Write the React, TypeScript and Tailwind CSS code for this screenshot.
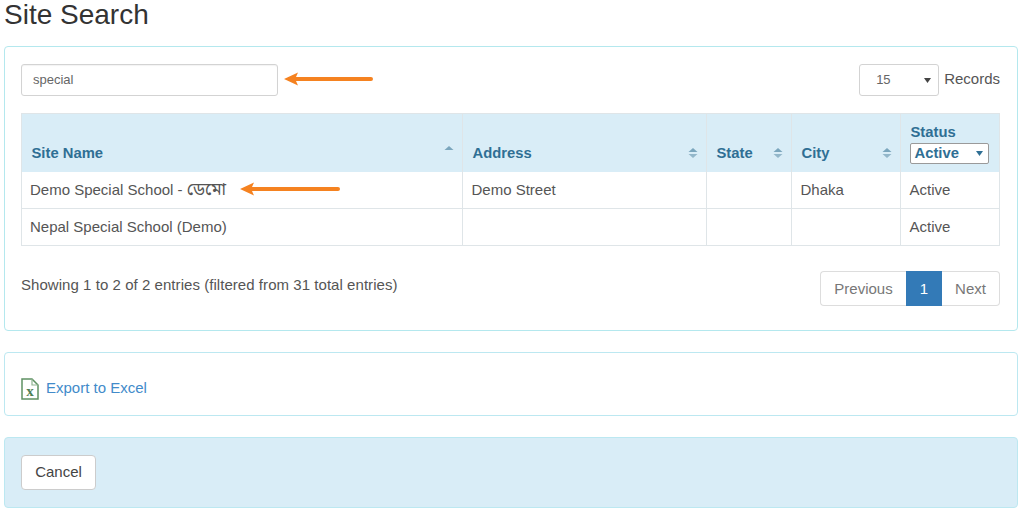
const font = { fontFamily: '"Liberation Sans", "Noto Sans", "Noto Sans Bengali", sans-serif' };

function SortIcon({ up = true, down = true }: { up?: boolean; down?: boolean }) {
	return (
		<svg width="10" height="12" viewBox="0 0 10 12" className="shrink-0">
			{up && <path d="M5 1 L9.5 5 L0.5 5 Z" fill="#7ba6bd" />}
			{down && <path d="M5 11 L9.5 7 L0.5 7 Z" fill="#93b7ca" />}
		</svg>
	);
}

function Arrow({ width }: { width: number }) {
	return (
		<svg width={width} height="16" viewBox={`0 0 ${width} 16`} className="shrink-0">
			<path d={`M1 8 L15 1.5 L13 6 L${width - 2} 6 A2 2 0 0 1 ${width - 2} 10 L13 10 L15 14.5 Z`} fill="#f58220" />
		</svg>
	);
}

function ExcelIcon() {
	return (
		<svg width="18" height="22" viewBox="0 0 18 22" className="shrink-0">
			<path d="M1 1 H11 L17 7 V21 H1 Z" fill="none" stroke="#5f9163" strokeWidth="1.5" />
			<path d="M11 1 V7 H17" fill="none" stroke="#8fb592" strokeWidth="1.2" />
			<text x="9" y="18" textAnchor="middle" fontSize="15" fontWeight="700" fill="#4f8055" fontFamily="Liberation Serif, serif">x</text>
		</svg>
	);
}

function Th({ children, className = "" }: { children: React.ReactNode; className?: string }) {
	return (
		<th className={`border-r border-[#dfe5e8] last:border-r-0 align-bottom text-left font-bold text-[14.8px] text-[#2f6f94] pb-[7px] pl-[10px] pr-[8px] ${className}`}>
			{children}
		</th>
	);
}

export default function App() {
	return (
		<div style={font} className="w-[1024px] h-[515px] bg-white overflow-hidden text-[15px] text-[#555555]">
			<h1 className="text-[28px] leading-[30px] text-[#333333] pl-[4px] h-[46px]">Site Search</h1>

			<div className="mx-[4px] w-[1014px] h-[285px] border border-[#b4e8ee] rounded-[4px] pt-[17px] px-[16px]">
				<div className="flex items-center justify-between h-[32px] pr-[1px]">
					<div className="flex items-center gap-[5px]">
						<div className="w-[257px] h-[32px] border border-[#d3d3d3] rounded-[3px] flex items-center pl-[11px] text-[13px] text-[#666666] shadow-[inset_0_1px_1px_rgba(0,0,0,0.05)]">
							special
						</div>
						<div className="-mt-[2px]"><Arrow width={90} /></div>
					</div>
					<div className="flex items-center gap-[5px]">
						<div className="w-[80px] h-[32px] border border-[#d3d3d3] rounded-[3px] flex items-center justify-between pl-[16px] pr-[7px] text-[13px] text-[#666666]">
							<span>15</span>
							<svg width="7" height="5" viewBox="0 0 7 5"><path d="M0 0 H7 L3.5 5 Z" fill="#444444" /></svg>
						</div>
						<span className="-mt-[1px]">Records</span>
					</div>
				</div>

				<table className="mt-[17px] w-[978px] table-fixed border-collapse border border-[#dfe5e8] -ml-[0.5px]">
					<colgroup>
						<col className="w-[441px]" />
						<col className="w-[244px]" />
						<col className="w-[85px]" />
						<col className="w-[109px]" />
						<col className="w-[99px]" />
					</colgroup>
					<thead>
						<tr className="h-[58px] bg-[#d9edf7]">
							<Th>
								<div className="flex items-center justify-between">
									<span>Site Name</span>
									<span className="-mt-[4px]"><SortIcon down={false} /></span>
								</div>
							</Th>
							<Th>
								<div className="flex items-center justify-between">
									<span>Address</span>
									<SortIcon />
								</div>
							</Th>
							<Th>
								<div className="flex items-center justify-between">
									<span>State</span>
									<SortIcon />
								</div>
							</Th>
							<Th>
								<div className="flex items-center justify-between">
									<span>City</span>
									<SortIcon />
								</div>
							</Th>
							<Th className="!pb-[8px]">
								<div className="leading-[16px] mb-[3px]">Status</div>
								<div className="-ml-[1px] w-[79px] h-[21px] bg-white border border-[#9a9a9a] rounded-[2px] flex items-center justify-between pl-[4px] pr-[5px]">
									<span>Active</span>
									<svg width="7" height="5" viewBox="0 0 7 5"><path d="M0 0 H7 L3.5 5 Z" fill="#2f6f94" /></svg>
								</div>
							</Th>
						</tr>
					</thead>
					<tbody>
						<tr className="h-[37px] border-b border-[#dfe5e8]">
							<td className="border-r border-[#dfe5e8] pl-[8.5px] pr-[9px] pt-[1px]">
								<div className="flex items-center gap-[13px]">
									<span>Demo Special School - <span className="text-[17px] leading-[20px]">ডেমো</span></span>
									<div className="-mt-[2px]"><Arrow width={101} /></div>
								</div>
							</td>
							<td className="border-r border-[#dfe5e8] px-[9px] pt-[1px]">Demo Street</td>
							<td className="border-r border-[#dfe5e8] px-[9px]"></td>
							<td className="border-r border-[#dfe5e8] px-[9px] pt-[1px]">Dhaka</td>
							<td className="px-[9px] pt-[1px]">Active</td>
						</tr>
						<tr className="h-[37px]">
							<td className="border-r border-[#dfe5e8] pl-[8.5px] pr-[9px]">Nepal Special School (Demo)</td>
							<td className="border-r border-[#dfe5e8] px-[9px]"></td>
							<td className="border-r border-[#dfe5e8] px-[9px]"></td>
							<td className="border-r border-[#dfe5e8] px-[9px]"></td>
							<td className="px-[9px]">Active</td>
						</tr>
					</tbody>
				</table>

				<div className="flex items-start justify-between mt-[25px] pr-[1px]">
					<span className="mt-[3px] tracking-[0.05px]">Showing 1 to 2 of 2 entries (filtered from 31 total entries)</span>
					<div className="flex h-[35px]">
						<div className="w-[86px] border border-r-0 border-[#dddddd] rounded-l-[4px] flex items-center justify-center pt-[1px] text-[#777777]">Previous</div>
						<div className="w-[36px] bg-[#337ab7] text-white flex items-center justify-center pt-[1px]">1</div>
						<div className="w-[58px] border border-l-0 border-[#dddddd] rounded-r-[4px] flex items-center justify-center pt-[1px] text-[#777777]">Next</div>
					</div>
				</div>
			</div>

			<div className="mx-[4px] mt-[21px] w-[1014px] h-[64px] border border-[#bce8f1] rounded-[4px] flex items-center pl-[16px] pt-[9px] gap-[7px]">
				<ExcelIcon />
				<span className="text-[#428bca]">Export to Excel</span>
			</div>

			<div className="mx-[4px] mt-[21px] w-[1014px] h-[71px] border border-[#bce8f1] bg-[#d9edf7] rounded-[4px] flex items-center pl-[16px]">
				<div className="w-[75px] h-[35px] bg-white border border-[#cccccc] rounded-[4px] flex items-center justify-center text-[#444444]">Cancel</div>
			</div>
		</div>
	);
}
